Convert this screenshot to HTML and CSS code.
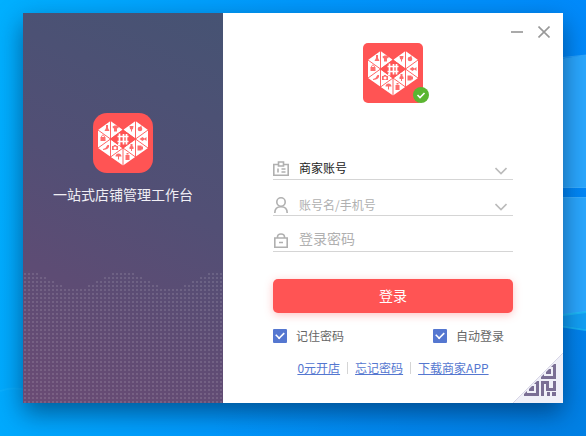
FILE: index.html
```html
<!DOCTYPE html>
<html lang="zh-CN">
<head>
<meta charset="utf-8">
<title>商家工作台登录</title>
<link rel="stylesheet" href="styles.css">
</head>
<body>
<svg class="wallpaper" viewBox="0 0 586 436" preserveAspectRatio="none" aria-hidden="true">
  <path d="M540 62 L586 55 V188 H540z M540 197 H586 V312 L540 318z" fill="#2aa8ff"/>
  <path d="M540 318 L586 312 V329 L540 322z" fill="#12a0f5"/>
  <path d="M540 60 L586 55 M540 187.500H586 M540 197.500H586" stroke="#45b3ff" opacity=".6"/>
  <path d="M540 318 L586 312 M540 323 L586 330" stroke="#20c4f8" stroke-width="2" opacity=".7"/>
  <path d="M0 391 Q14 386 30 391" fill="none" stroke="#20bcff" stroke-width="2" opacity=".25"/>
</svg>

<svg class="defs" aria-hidden="true">
  <symbol id="brand" viewBox="0 0 60 60">
    <path fill="#fff" d="M17.500 8 L30 17 L42.500 8 L55 17 V35 L30 52.500 L5 35 V17z"/>
    <path fill="#ff5454" d="M30 16.500 L43 26 L30 35.500 L17 26z"/>
    <path fill="none" stroke="#ff5454" stroke-width=".9" d="M17.500 8V44 M42.500 8V44 M30 17V14 M30 35V53 M5 17L30 35L55 17 M5 35L30 17L55 35 M17.500 44L30 35L42.500 44"/>
    <g fill="#ff5454" opacity=".85">
      <path d="M13 12h2v3l1.500 3h-5l1.500-3z"/>
      <path d="M19.500 13.500l2-1h2.500l2 1-1 2-1-.5v3.500h-3v-3.500l-1 .5z"/>
      <path d="M36.500 13h4l-.5 3-1 .5v2h-1v-2l-1-.5z"/>
      <circle cx="47" cy="16" r="2.300"/><path d="M47 14l1.500-2v3z"/>
      <path d="M7.500 24h5v4h-5z"/><path d="M8.500 24c0-2.500 3-2.500 3 0" fill="none" stroke="#ff5454"/>
      <path d="M46.500 26l3-2 2 1.500 2-1.500v4l-2-1.500-2 1.500z"/>
      <path d="M10 36l2.500-1 2-3h1.500c.5 3-1.500 4.500-6 5z"/>
      <path fill-rule="evenodd" d="M19 33h1.500l.5-1h2l.5 1h1.500v4h-6z M22 33.500a1.500 1.500 0 1 0 .1 0z"/>
      <path d="M37.500 31h2v2l1 1v2h-1.500v2h-1v-2h-1.500v-2l1-1z"/>
      <path d="M44.500 32.500h4v1h1.500v3h-1.500v1h-4z"/>
      <path d="M22.500 43.500c0-4 6-4 6 0h-2.500v3h-1v-3z"/>
      <path d="M32.500 42h4v5h-4z M33.500 40h2v1.500h-2z"/>
    </g>
    <path fill="none" stroke="#fff" stroke-width="1.700" d="M24.500 23.500H35.500 M24.500 28.500H35.500 M26.500 20.500V31.500 L25 31 M30.500 21V31.500 M33.500 21V31.500"/>
  </symbol>
  <symbol id="chevron" viewBox="0 0 12 8"><path d="M.5 1l5.500 5.500L11.500 1" fill="none" stroke="#bbb" stroke-width="1.600"/></symbol>
</svg>

<main class="window">
  <aside class="intro">
    <svg class="intro-logo"><use href="#brand"/></svg>
    <p class="slogan">一站式店铺管理工作台</p>
    <svg class="wave" aria-hidden="true">
      <defs>
        <pattern id="dots" width="4" height="4" patternUnits="userSpaceOnUse"><rect x="1" width="2" height="2" fill="#fff" opacity=".12"/></pattern>
        <pattern id="crest" width="96" height="16" patternUnits="userSpaceOnUse">
          <path fill="#fff" d="M0 0h16v4h8v4h8v4h8v4H0z M96 0h-8v4h-8v4h-8v4h-8v4h32z"/>
        </pattern>
        <mask id="wave-mask"><rect width="100%" height="16" fill="url(#crest)"/><rect y="16" width="100%" height="114" fill="#fff"/></mask>
      </defs>
      <rect width="100%" height="130" fill="url(#dots)" mask="url(#wave-mask)"/>
    </svg>
  </aside>

  <section class="login">
    <div class="titlebar">
      <button type="button" aria-label="最小化"><svg width="12" height="12"><path d="M0 6h12" stroke="#aaa" stroke-width="2"/></svg></button>
      <button type="button" aria-label="关闭"><svg width="12" height="12"><path d="M.5 .5l11 11M11.500 .5l-11 11" stroke="#999" stroke-width="1.600"/></svg></button>
    </div>

    <div class="avatar">
      <svg class="avatar-logo"><use href="#brand"/></svg>
      <svg class="status" viewBox="0 0 16 16"><circle cx="8" cy="8" r="8" fill="#5bb531"/><path d="M4.500 8l2.500 2.500 4.500-4.500" fill="none" stroke="#fff" stroke-width="1.600"/></svg>
    </div>

    <form class="form">
      <div class="field">
        <svg class="field-icon" viewBox="0 0 16 16"><path d="M5 3.500H.8v10.700h14.400V3.500H11 M5.500 1h5v4h-5z M5 7.500v4 M8.500 8h4 M8.500 11h4" fill="none" stroke="#b0b0b0" stroke-width="1.600"/></svg>
        <select aria-label="账号类型"><option>商家账号</option></select>
        <svg class="chevron"><use href="#chevron"/></svg>
      </div>
      <div class="field">
        <svg class="field-icon" viewBox="0 0 16 16"><circle cx="8" cy="5" r="4.200" fill="none" stroke="#b0b0b0" stroke-width="1.600"/><path d="M1.800 16c0-4 2.200-6.200 6.200-6.200s6.200 2.200 6.200 6.200" fill="none" stroke="#b0b0b0" stroke-width="1.600"/></svg>
        <input type="text" aria-label="账号" placeholder="账号名/手机号">
        <button type="button" class="expand" aria-label="选择账号"><svg class="chevron"><use href="#chevron"/></svg></button>
      </div>
      <div class="field password">
        <svg class="field-icon" viewBox="0 0 16 16"><path d="M1.800 5h12.400v9.200H1.800z M4.500 5V4c0-4 7-4 7 0V5 M6 9.500h4" fill="none" stroke="#b0b0b0" stroke-width="1.600"/></svg>
        <input type="password" aria-label="密码" placeholder="登录密码">
      </div>
      <button type="submit" class="submit">登录</button>
      <div class="options">
        <label><input type="checkbox" checked>记住密码</label>
        <label><input type="checkbox" checked>自动登录</label>
      </div>
      <nav class="links">
        <a href="#">0元开店</a><a href="#">忘记密码</a><a href="#">下载商家APP</a>
      </nav>
    </form>

    <button type="button" class="qr" aria-label="扫码登录">
      <svg viewBox="0 0 50 50">
        <defs><clipPath id="fold"><path d="M50 2V50H2z"/></clipPath></defs>
        <path d="M50 0V50H0z" fill="#f0f0f8"/>
        <path d="M0 50L50 0" stroke="#d8d6e6"/>
        <g clip-path="url(#fold)" fill="#7a6e94">
          <path fill-rule="evenodd" d="M28 11h15v15H28z M31 14v9h9v-9z"/>
          <path d="M33 16h5v5h-5z"/>
          <path fill-rule="evenodd" d="M11 28h15v15H11z M14 31v9h9v-9z"/>
          <path d="M16 33h5v5h-5z"/>
          <path d="M28 28h8v7h4v-7h3v10H33v-7h-2v12h-3z M34 39h3v4h-3z M39 39h4v4h-4z"/>
        </g>
      </svg>
    </button>
  </section>
</main>
</body>
</html>
```
FILE: styles.css
```css
* {
  box-sizing: border-box;
}

body {
  margin: 0;
  min-height: 100vh;
  padding: 13px 23px 33px;
  display: flex;
  font: 12px/18px "Noto Sans CJK SC", sans-serif;
  color: #666;
  background:
    radial-gradient(ellipse at 100% 100%, #0080e4 0%, rgba(0, 128, 228, 0) 45%),
    linear-gradient(100deg, #00b0ff 0%, #0098fc 45%, #0086fa 100%);
}

button,
input,
select {
  margin: 0;
  padding: 0;
  border: 0;
  background: none;
  font: inherit;
  color: inherit;
  outline: none;
}

button {
  cursor: pointer;
}

svg {
  display: block;
}

.wallpaper {
  position: absolute;
  inset: 0;
  width: 100%;
  height: 100%;
}

.defs {
  position: absolute;
  width: 0;
  height: 0;
}

.window {
  position: relative;
  flex: 1;
  display: flex;
  background: #fff;
  box-shadow: 0 10px 24px rgba(0, 20, 50, 0.5);
}

.intro {
  flex: 0 0 200px;
  display: flex;
  flex-direction: column;
  align-items: center;
  padding-top: 100px;
  background: linear-gradient(205deg, #465373 0%, #524f75 45%, #5d4c74 70%, #6a4b74 100%);
}

.intro-logo {
  width: 60px;
  height: 60px;
  border-radius: 14px;
  background: #ff5454;
}

.slogan {
  margin: 11px 0 0;
  font-size: 14px;
  line-height: 20px;
  color: #f0eef4;
}

.wave {
  width: 100%;
  height: 130px;
  margin-top: auto;
}

.login {
  position: relative;
  flex: 1;
  display: flex;
  flex-direction: column;
  align-items: center;
}

.titlebar {
  align-self: stretch;
  display: flex;
  justify-content: flex-end;
  gap: 15px;
  padding: 13px 13px 5px;
}

.avatar {
  position: relative;
}

.avatar-logo {
  width: 60px;
  height: 60px;
  border-radius: 5px;
  background: #ff5454;
}

.status {
  position: absolute;
  right: -6px;
  bottom: 0;
  width: 16px;
  height: 16px;
}

.form {
  width: 240px;
  margin-top: 41px;
}

.field {
  display: flex;
  align-items: center;
  height: 36px;
  padding: 13px 6px 0 0;
  border-bottom: 1px solid #d5d5d5;
}

.field-icon {
  flex: none;
  width: 16px;
  height: 16px;
  margin-top: 2px;
  margin-right: 10px;
}

.field select,
.field input {
  flex: 1;
  min-width: 0;
  height: 22px;
  appearance: none;
}

.field select {
  color: #222;
}

.field input::placeholder {
  color: #b0b0b0;
  opacity: 1;
}

.password input {
  padding-bottom: 4px;
  font-size: 14px;
}

.chevron {
  width: 12px;
  height: 8px;
  margin-top: 6px;
}

.submit {
  display: block;
  width: 100%;
  height: 34px;
  margin-top: 27px;
  padding-bottom: 2px;
  border-radius: 5px;
  background: #ff5454;
  box-shadow: 0 2px 8px rgba(255, 84, 84, 0.35);
  font-size: 14px;
  color: #fff;
}

.options {
  display: flex;
  justify-content: space-between;
  margin-top: 14px;
  padding-right: 9px;
}

.options label {
  display: flex;
  align-items: center;
  gap: 9px;
}

.options input {
  appearance: none;
  display: grid;
  place-items: center;
  width: 14px;
  height: 14px;
  border-radius: 1px;
  background: #5577d0;
}

.options input:checked::before {
  content: "";
  width: 8px;
  height: 5px;
  margin-bottom: 3px;
  border: solid #fff;
  border-width: 0 0 2px 2px;
  transform: rotate(-45deg) scale(0.8);
}

.links {
  display: flex;
  justify-content: center;
  align-items: center;
  margin-top: 14px;
}

.links a {
  color: #5577d0;
}

.links a + a::before {
  content: "";
  display: inline-block;
  width: 1px;
  height: 12px;
  margin: 0 7px;
  vertical-align: -1px;
  background: #d5d5d5;
}

.qr {
  position: absolute;
  right: 0;
  bottom: 0;
  width: 50px;
  height: 50px;
}
```
